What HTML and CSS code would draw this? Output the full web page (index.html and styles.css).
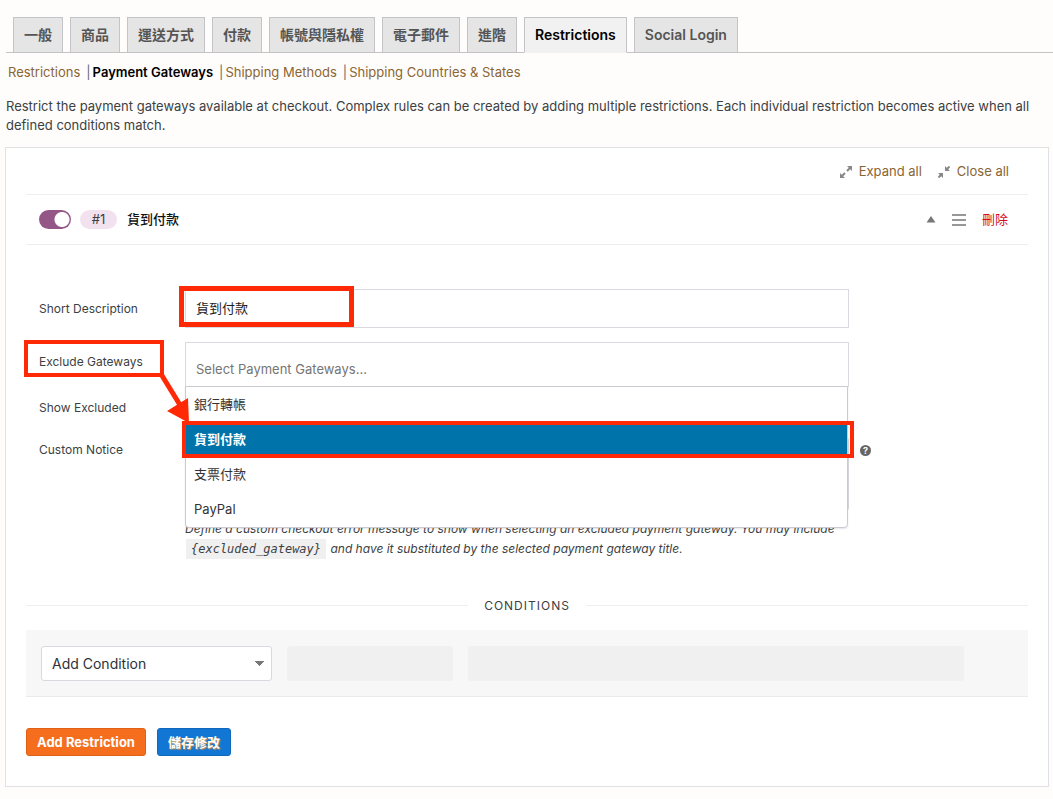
FILE: index.html
```html
<!DOCTYPE html>
<html lang="zh-Hant">
<head>
<meta charset="utf-8">
<meta name="viewport" content="width=device-width, initial-scale=1">
<title>Payment Gateways Restrictions</title>
<link rel="stylesheet" href="styles.css">
</head>
<body>
<nav class="tabs">
  <a class="tab" href="#">一般</a>
  <a class="tab" href="#">商品</a>
  <a class="tab" href="#">運送方式</a>
  <a class="tab" href="#">付款</a>
  <a class="tab" href="#">帳號與隱私權</a>
  <a class="tab" href="#">電子郵件</a>
  <a class="tab" href="#">進階</a>
  <a class="tab tab-active" href="#">Restrictions</a>
  <a class="tab" href="#">Social Login</a>
</nav>
<ul class="sections">
  <li><a href="#">Restrictions</a></li>
  <li><a class="current" href="#">Payment Gateways</a></li>
  <li><a href="#">Shipping Methods</a></li>
  <li><a href="#">Shipping Countries &amp; States</a></li>
</ul>
<p class="intro">Restrict the payment gateways available at checkout. Complex rules can be created by adding multiple restrictions. Each individual restriction becomes active when all defined conditions match.</p>

<main class="panel">
  <div class="toolbar">
    <a href="#">
      <svg class="tool-icon" viewBox="0 0 12 12" aria-hidden="true"><path class="tail" d="M7 5l3-3M5 7l-3 3"/><path d="M7 0h5v5zM0 7v5h5z"/></svg>
      Expand all</a>
    <a href="#">
      <svg class="tool-icon" viewBox="0 0 12 12" aria-hidden="true"><path class="tail" d="M8 4l3.500-3.500M4 8L0.500 11.500"/><path d="M7 0v5h5zM0 7h5v5z"/></svg>
      Close all</a>
  </div>

  <header class="rule">
    <input class="toggle" type="checkbox" checked aria-label="Enable restriction">
    <span class="badge">#1</span>
    <h2 class="rule-title">貨到付款</h2>
    <div class="rule-actions">
      <button class="icon-button" type="button" aria-label="Collapse"><svg width="10" height="7" viewBox="0 0 10 7"><path d="M5 0l4.500 6.500h-9z" fill="#777"/></svg></button>
      <button class="icon-button" type="button" aria-label="Reorder"><svg width="14" height="12" viewBox="0 0 14 12"><path d="M0 1h14M0 6h14M0 11h14" stroke="#777" stroke-width="1.500"/></svg></button>
      <a class="delete" href="#">刪除</a>
    </div>
  </header>

  <form class="fields">
    <div class="field field-text">
      <label for="desc">Short Description</label>
      <div class="control">
        <input class="text-input" id="desc" type="text" value="貨到付款">
        <span class="mark mark-desc"></span>
      </div>
    </div>
    <div class="field field-gateways">
      <label for="gateways">Exclude Gateways</label>
      <span class="mark mark-label"></span>
      <div class="control">
        <input class="text-input gateways-input" id="gateways" type="text" placeholder="Select Payment Gateways..." role="combobox" aria-expanded="true" aria-controls="gateway-list">
        <ul class="dropdown" id="gateway-list" role="listbox">
          <li role="option">銀行轉帳</li>
          <li class="selected" role="option" aria-selected="true">貨到付款<span class="mark mark-option"></span></li>
          <li role="option">支票付款</li>
          <li role="option">PayPal</li>
        </ul>
      </div>
      <svg class="arrow" width="36" height="54" viewBox="0 0 36 54" aria-hidden="true"><path d="M5 3L24 34" stroke="#ff2a05" stroke-width="5"/><path d="M33 52L11 40 32 27z" fill="#ff2a05"/></svg>
    </div>
    <div class="field field-check">
      <label for="show">Show Excluded</label>
      <div class="control"><input id="show" type="checkbox"></div>
    </div>
    <div class="field field-notice">
      <label for="notice">Custom Notice</label>
      <div class="control">
        <textarea class="notice" id="notice"></textarea>
        <span class="help" title="Help">?</span>
        <p class="hint">Define a custom checkout error message to show when selecting an excluded payment gateway. You may include <code>{excluded_gateway}</code> and have it substituted by the selected payment gateway title.</p>
      </div>
    </div>
  </form>

  <h3 class="divider">CONDITIONS</h3>
  <div class="conditions">
    <select class="condition-select" aria-label="Add Condition"><option>Add Condition</option></select>
    <div class="slot"></div>
    <div class="slot"></div>
  </div>

  <div class="buttons">
    <button class="button button-add" type="button">Add Restriction</button>
    <button class="button button-save" type="submit">儲存修改</button>
  </div>
</main>
</body>
</html>
```

FILE: styles.css
```css
* { box-sizing: border-box; }
body {
  margin: 0;
  background: #fefdfb;
  color: #3c3f43;
  font: 13px/19px Inter, "Noto Sans CJK TC", sans-serif;
}
a { color: #8a6534; text-decoration: none; }
h2, h3, p, ul { margin: 0; padding: 0; font: inherit; }
ul { list-style: none; }
input, select, textarea, button { font: inherit; color: inherit; margin: 0; }

.tabs {
  display: flex;
  gap: 7px;
  margin: 17px 0 0 6px;
  padding-left: 7px;
  border-bottom: 1px solid #c3c4c7;
}
.tab {
  padding: 0 10px;
  border: 1px solid #c3c4c7;
  border-bottom: 0;
  background: #e5e5e5;
  color: #555;
  font-size: 14px;
  font-weight: 600;
  line-height: 34px;
}
.tab-active { background: #f1f1f1; color: #000; margin-bottom: -1px; border-bottom: 1px solid #f1f1f1; }

.sections { display: flex; margin: 10px 8px 0; }
.sections li + li::before { content: "|"; margin: 0 2px 0 6px; color: #646970; }
.current { color: #000; font-weight: 600; }
.intro { margin: 15px 6px 12px; }

.panel {
  margin: 0 4px 12px 5px;
  padding: 0 20px 30px;
  border: 1px solid #dfe1e5;
  background: #fff;
}
.toolbar {
  display: flex;
  justify-content: flex-end;
  gap: 16px;
  padding: 14px 19px 13px 0;
  border-bottom: 1px solid #eee;
}
.toolbar a { display: flex; align-items: center; gap: 7px; }
.tool-icon { width: 12px; height: 12px; fill: #888; }
.tail { stroke: #888; stroke-width: 2; }

.rule {
  display: flex;
  align-items: center;
  height: 50px;
  padding: 0 20px 0 13px;
  border-bottom: 1px solid #eee;
}
.toggle {
  appearance: none;
  width: 32px;
  height: 19px;
  border-radius: 10px;
  background: radial-gradient(circle at 23px 50%, #fff 7px, #935687 8px);
}
.badge {
  width: 37px;
  margin: 0 10px 0 9px;
  border-radius: 10px;
  background: #f2e2f0;
  text-align: center;
}
.rule-title { color: #111; font-weight: 500; }
.rule-actions { display: flex; align-items: center; gap: 16px; margin-left: auto; }
.icon-button { display: flex; padding: 0; border: 0; background: none; }
.delete { color: #d40f1f; }

.fields { padding: 44px 0 0 13px; }
.field { position: relative; display: grid; grid-template-columns: 146px 1fr; padding-right: 179px; }
.field label { font-size: 12px; }
.control { position: relative; min-width: 0; }
.field-text { line-height: 39px; }
.field-gateways { margin-top: 14px; line-height: 39px; }
.field-check { margin-top: 11px; height: 42px; }
.text-input {
  display: block;
  width: 100%;
  height: 39px;
  padding: 0 10px;
  border: 1px solid #d9dadf;
  background: #fff;
  color: #222;
}
.gateways-input { height: 45px; padding-top: 8px; }
.gateways-input::placeholder { color: #757575; }
.notice {
  display: block;
  width: 100%;
  height: 74px;
  border: 1px solid #d9dadf;
  border-radius: 3px;
  resize: none;
}
.field-notice .control { margin-top: -3px; }
.help {
  position: absolute;
  top: 8px;
  right: -22px;
  width: 11px;
  height: 11px;
  border-radius: 50%;
  background: #666;
  color: #fff;
  font-size: 9px;
  font-weight: 700;
  line-height: 11px;
  text-align: center;
}
.hint { margin-top: 8px; font-size: 12px; line-height: 20px; font-style: italic; }
.hint code {
  padding: 3px 5px;
  margin: 0 1px;
  background: #f0f0f0;
  font: italic 12px/14px "DejaVu Sans Mono", monospace;
}

.dropdown {
  position: absolute;
  z-index: 2;
  top: 44px;
  left: 0;
  right: 1px;
  border: 1px solid #c9cbd1;
  border-radius: 0 0 4px 4px;
  background: #fff;
  color: #333;
  box-shadow: 0 1px 2px rgba(0, 0, 0, .1);
}
.dropdown li { position: relative; padding: 0 8px; line-height: 35px; }
.dropdown .selected { background: #0073aa; color: #fff; font-weight: 600; }

.mark { position: absolute; z-index: 3; border: 4px solid #ff2a05; pointer-events: none; }
.mark-desc { top: -3px; left: -6px; width: 175px; height: 41px; border-width: 5px; }
.mark-label { top: -2px; left: -15px; width: 140px; height: 37px; }
.mark-option { top: -1px; bottom: -1px; left: -4px; right: -7px; }
.arrow { position: absolute; z-index: 4; top: 29px; left: 117px; }

.divider {
  display: flex;
  align-items: center;
  gap: 16px;
  margin: 37px 0 15px;
  font-size: 12px;
  letter-spacing: 1px;
}
.divider::before, .divider::after { content: ""; flex: 1; border-top: 1px solid #eee; }
.conditions {
  display: grid;
  grid-template-columns: 231px 1fr 3fr;
  gap: 15px;
  padding: 16px 64px 15px 15px;
  border-bottom: 1px solid #eaeaea;
  background: #f7f7f7;
}
.condition-select {
  appearance: none;
  height: 35px;
  padding: 0 10px;
  border: 1px solid #d9dadf;
  border-radius: 3px;
  background: conic-gradient(from 315deg at 50% 100%, #777 90deg, transparent 0) right 7px center / 9px 5px no-repeat, #fff;
  color: #2c3338;
  font-size: 14px;
}
.slot { border-radius: 3px; background: #f0f0f0; }
.buttons { display: flex; gap: 11px; margin-top: 31px; }
.button {
  height: 28px;
  padding: 0 10px;
  border: 1px solid #e06016;
  border-radius: 3px;
  background: #f56e1e;
  color: #fff;
  font-weight: 700;
}
.button-save { border-color: #1268bd; background: #1277d4; text-shadow: 1px 1px 1px #d98a45; }
```
